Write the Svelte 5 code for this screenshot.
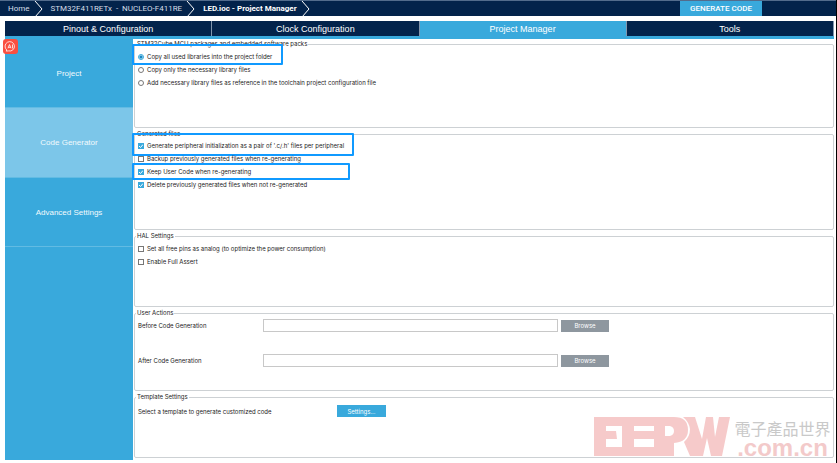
<script>
  let copyMode = $state('all');
  const crumbs = ['Home', 'STM32F411RETx  -  NUCLEO-F411RE', 'LED.ioc - Project Manager'];
  const tabs = ['Pinout & Configuration', 'Clock Configuration', 'Project Manager', 'Tools'];
  const sections = ['Project', 'Code Generator', 'Advanced Settings'];
  const copyOptions = [
    { value: 'all', text: 'Copy all used libraries into the project folder', mark: 'mark-a' },
    { value: 'needed', text: 'Copy only the necessary library files' },
    { value: 'reference', text: 'Add necessary library files as reference in the toolchain project configuration file' }
  ];
  let generated = $state([
    { text: "Generate peripheral initialization as a pair of '.c/.h' files per peripheral", on: true, mark: 'mark-b' },
    { text: 'Backup previously generated files when re-generating', on: false },
    { text: 'Keep User Code when re-generating', on: true, mark: 'mark-c' },
    { text: 'Delete previously generated files when not re-generated', on: true }
  ]);
  let hal = $state([
    { text: 'Set all free pins as analog (to optimize the power consumption)', on: false },
    { text: 'Enable Full Assert', on: false }
  ]);
  let actions = $state([
    { id: 'before', text: 'Before Code Generation', path: '' },
    { id: 'after', text: 'After Code Generation', path: '' }
  ]);
</script>

<div class="app">
  <header>
    <nav class="crumbs" aria-label="Breadcrumb">
      {#each crumbs as crumb, i}
        <a href="#crumb{i}" class:current={i === 2}>{crumb}</a>
        <svg class="chevron" viewBox="0 0 9 16" aria-hidden="true"><path d="M1 0 8 8 1 16" /></svg>
      {/each}
    </nav>
    <button class="generate">GENERATE CODE</button>
  </header>

  <nav class="tabs" aria-label="Views">
    {#each tabs as tab, i}
      <button class:active={i === 2}>{tab}</button>
    {/each}
  </nav>

  <div class="body">
    <nav class="side" aria-label="Sections">
      {#each sections as section, i}
        <button class:active={i === 1}>{section}</button>
      {/each}
      <svg class="ai" viewBox="0 0 15 15" aria-hidden="true">
        <rect width="15" height="15" rx="3" />
        <path d="M3.8 11A4.7 4.7 0 1 1 5.6 11.9L3.2 12.1Z" />
        <path d="M5 9.3 6.5 5.6 8 9.3M5.5 8.3H7.5M9.5 5.5V9.4" />
      </svg>
    </nav>

    <main>
      <fieldset class="packs">
        <legend>STM32Cube MCU packages and embedded software packs</legend>
        {#each copyOptions as option}
          <div class="row">
            <label><input type="radio" name="copy" value={option.value} bind:group={copyMode} />{option.text}</label>
            {#if option.mark}<span class="mark {option.mark}"></span>{/if}
          </div>
        {/each}
      </fieldset>

      <fieldset class="files">
        <legend>Generated files</legend>
        {#each generated as option}
          <div class="row">
            <label><input type="checkbox" bind:checked={option.on} />{option.text}</label>
            {#if option.mark}<span class="mark {option.mark}"></span>{/if}
          </div>
        {/each}
      </fieldset>

      <fieldset class="hal">
        <legend>HAL Settings</legend>
        {#each hal as option}
          <div class="row">
            <label><input type="checkbox" bind:checked={option.on} />{option.text}</label>
          </div>
        {/each}
      </fieldset>

      <fieldset class="actions">
        <legend>User Actions</legend>
        {#each actions as action}
          <div class="action">
            <label for={action.id}>{action.text}</label>
            <input id={action.id} type="text" bind:value={action.path} />
            <button class="browse">Browse</button>
          </div>
        {/each}
      </fieldset>

      <fieldset class="template">
        <legend>Template Settings</legend>
        <div class="pick">
          <span>Select a template to generate customized code</span>
          <button class="settings">Settings...</button>
        </div>
      </fieldset>
    </main>
  </div>

  <div class="watermark">
    <svg viewBox="0 0 136 39" aria-hidden="true">
      <path fill-rule="evenodd" d="M0 0H80Q94 0 94 13Q94 25 80 26V39H0ZM12 9V14H22L23 22H12V30H28V9ZM40 9V14H60V9ZM40 22V30H60V22ZM71 9V19H76Q80 18 80 14Q80 10 76 9Z" />
      <path d="M89 0H101L108 22 112 0H119L121 20 125 0H136L128 39H117L113 21 109 39H96L90 25Q96 20 96 12Q95 5 89 0Z" />
    </svg>
    <div class="site">
      <span class="cn">電子產品世界</span>
      <span class="domain">.com.cn</span>
    </div>
  </div>
</div>

<style>
  :global(body) { margin: 0; background: #fff; }
  .app {
    position: relative;
    box-sizing: border-box;
    min-height: 100vh;
    border-right: 1px solid #000;
    font-family: Inter, "Liberation Sans", Arial, sans-serif;
    font-size: 6px;
    color: #222;
    --navy: #03234b;
    --blue: #39a9dc;
  }
  button { border: 0; padding: 0; font: inherit; cursor: pointer; }
  header {
    display: flex;
    justify-content: space-between;
    height: 16px;
    box-sizing: border-box;
    border-top: 1px solid #536c8c;
    padding-right: 74px;
    background: var(--navy);
    font-family: Roboto, "Liberation Sans", Arial, sans-serif;
  }
  .crumbs { display: flex; align-items: center; padding-left: 8px; }
  .crumbs a { color: #d5dde6; font-size: 8px; text-decoration: none; white-space: pre; }
  .crumbs a.current { color: #fff; font-weight: bold; }
  .chevron { width: 9px; height: 16px; margin: 0 8px 0 4px; fill: none; stroke: #fff; stroke-width: 1; }
  .generate { width: 82px; background: var(--blue); color: #fff; font-size: 8px; font-weight: 500; }
  .tabs {
    display: flex;
    margin: 5px 2px 0 5px;
    border-bottom: 3px solid var(--blue);
    font-family: "Liberation Sans", Arial, sans-serif;
  }
  .tabs button {
    flex: 1;
    height: 15px;
    border-right: 1px solid #8296ad;
    background: var(--navy);
    color: #fff;
    font-size: 9px;
  }
  .tabs button.active { background: var(--blue); }
  .body { display: flex; margin: 0 2px 0 5px; }
  .side {
    position: relative;
    width: 128px;
    min-height: 421px;
    flex: none;
    background: var(--blue);
    font-family: "Liberation Sans", Arial, sans-serif;
  }
  .side button {
    display: block;
    width: 100%;
    height: 69px;
    border-bottom: 1px solid #62bbe3;
    background: var(--blue);
    color: #f2fafd;
    font-size: 8px;
  }
  .side button.active { height: 70px; background: #7cc6e9; }
  .ai { position: absolute; left: -2px; top: 0; width: 15px; height: 15px; fill: none; stroke: #fff; stroke-width: 0.8; }
  .ai rect { fill: #fa4f40; stroke: none; }
  main { flex: 1; display: flex; flex-direction: column; gap: 2px; padding: 1px 0 0 1px; min-width: 0; }
  fieldset {
    box-sizing: border-box;
    min-width: 0;
    margin: 0;
    border: 1px solid #cdd1d4;
    border-radius: 2px;
    padding: 2px 3px 0;
  }
  legend { padding: 0 1px; margin-left: -2px; line-height: 8px; }
  .packs { min-height: 88px; }
  .files { min-height: 100px; padding-top: 1px; }
  .hal { min-height: 75px; }
  .actions { min-height: 82px; }
  .template { min-height: 65px; padding-top: 4px; }
  .row { position: relative; display: flex; height: 13px; }
  .row label { display: flex; align-items: center; gap: 3px; white-space: nowrap; }
  .row input {
    appearance: none;
    box-sizing: border-box;
    width: 6px;
    height: 6px;
    margin: 0;
    border: 1px solid #777;
    background: #fff;
  }
  .row input[type="radio"] { border-radius: 50%; }
  .row input[type="radio"]:checked { border-color: var(--blue); background: radial-gradient(circle, #1788c4 1px, #d4edf8 2px); }
  .row input[type="checkbox"]:checked {
    border-color: var(--blue);
    background: var(--blue) url("data:image/svg+xml,%3Csvg xmlns='http://www.w3.org/2000/svg' viewBox='0 0 6 6'%3E%3Cpath d='M1 3 2.5 4.5 5 1.5' fill='none' stroke='white'/%3E%3C/svg%3E") center / 6px 6px;
  }
  .mark { position: absolute; left: -6px; top: -6px; box-sizing: border-box; border: 2px solid #109aff; border-radius: 1px; pointer-events: none; }
  .mark-a { width: 151px; height: 21px; }
  .mark-b { width: 222px; height: 23px; }
  .mark-c { width: 218px; height: 17px; top: -2px; }
  .action {
    display: grid;
    grid-template-columns: 125px minmax(0, 295px) 51px;
    align-items: center;
    margin-bottom: 22px;
  }
  .action input { box-sizing: border-box; height: 13px; margin: 0; border: 1px solid #c8c8c8; padding: 0 2px; font: inherit; }
  .action .browse { margin-left: 3px; }
  .browse { height: 12px; background: #8e979f; color: #fff; }
  .pick { display: flex; align-items: center; }
  .pick span { width: 199px; }
  .settings { width: 49px; height: 12px; background: var(--blue); color: #fff; }
  .watermark { position: absolute; right: 4px; bottom: 7px; display: flex; gap: 3px; pointer-events: none; }
  .watermark svg { width: 136px; height: 39px; fill: rgba(226, 80, 80, 0.3); }
  .site { display: flex; flex-direction: column; align-items: center; width: 99px; height: 39px; }
  .cn { font: 16px/22px "Noto Sans CJK TC", serif; color: #c9c9c9; }
  .domain { font: bold 24px/18px "Liberation Sans", Arial, sans-serif; color: #f3caca; }
</style>
